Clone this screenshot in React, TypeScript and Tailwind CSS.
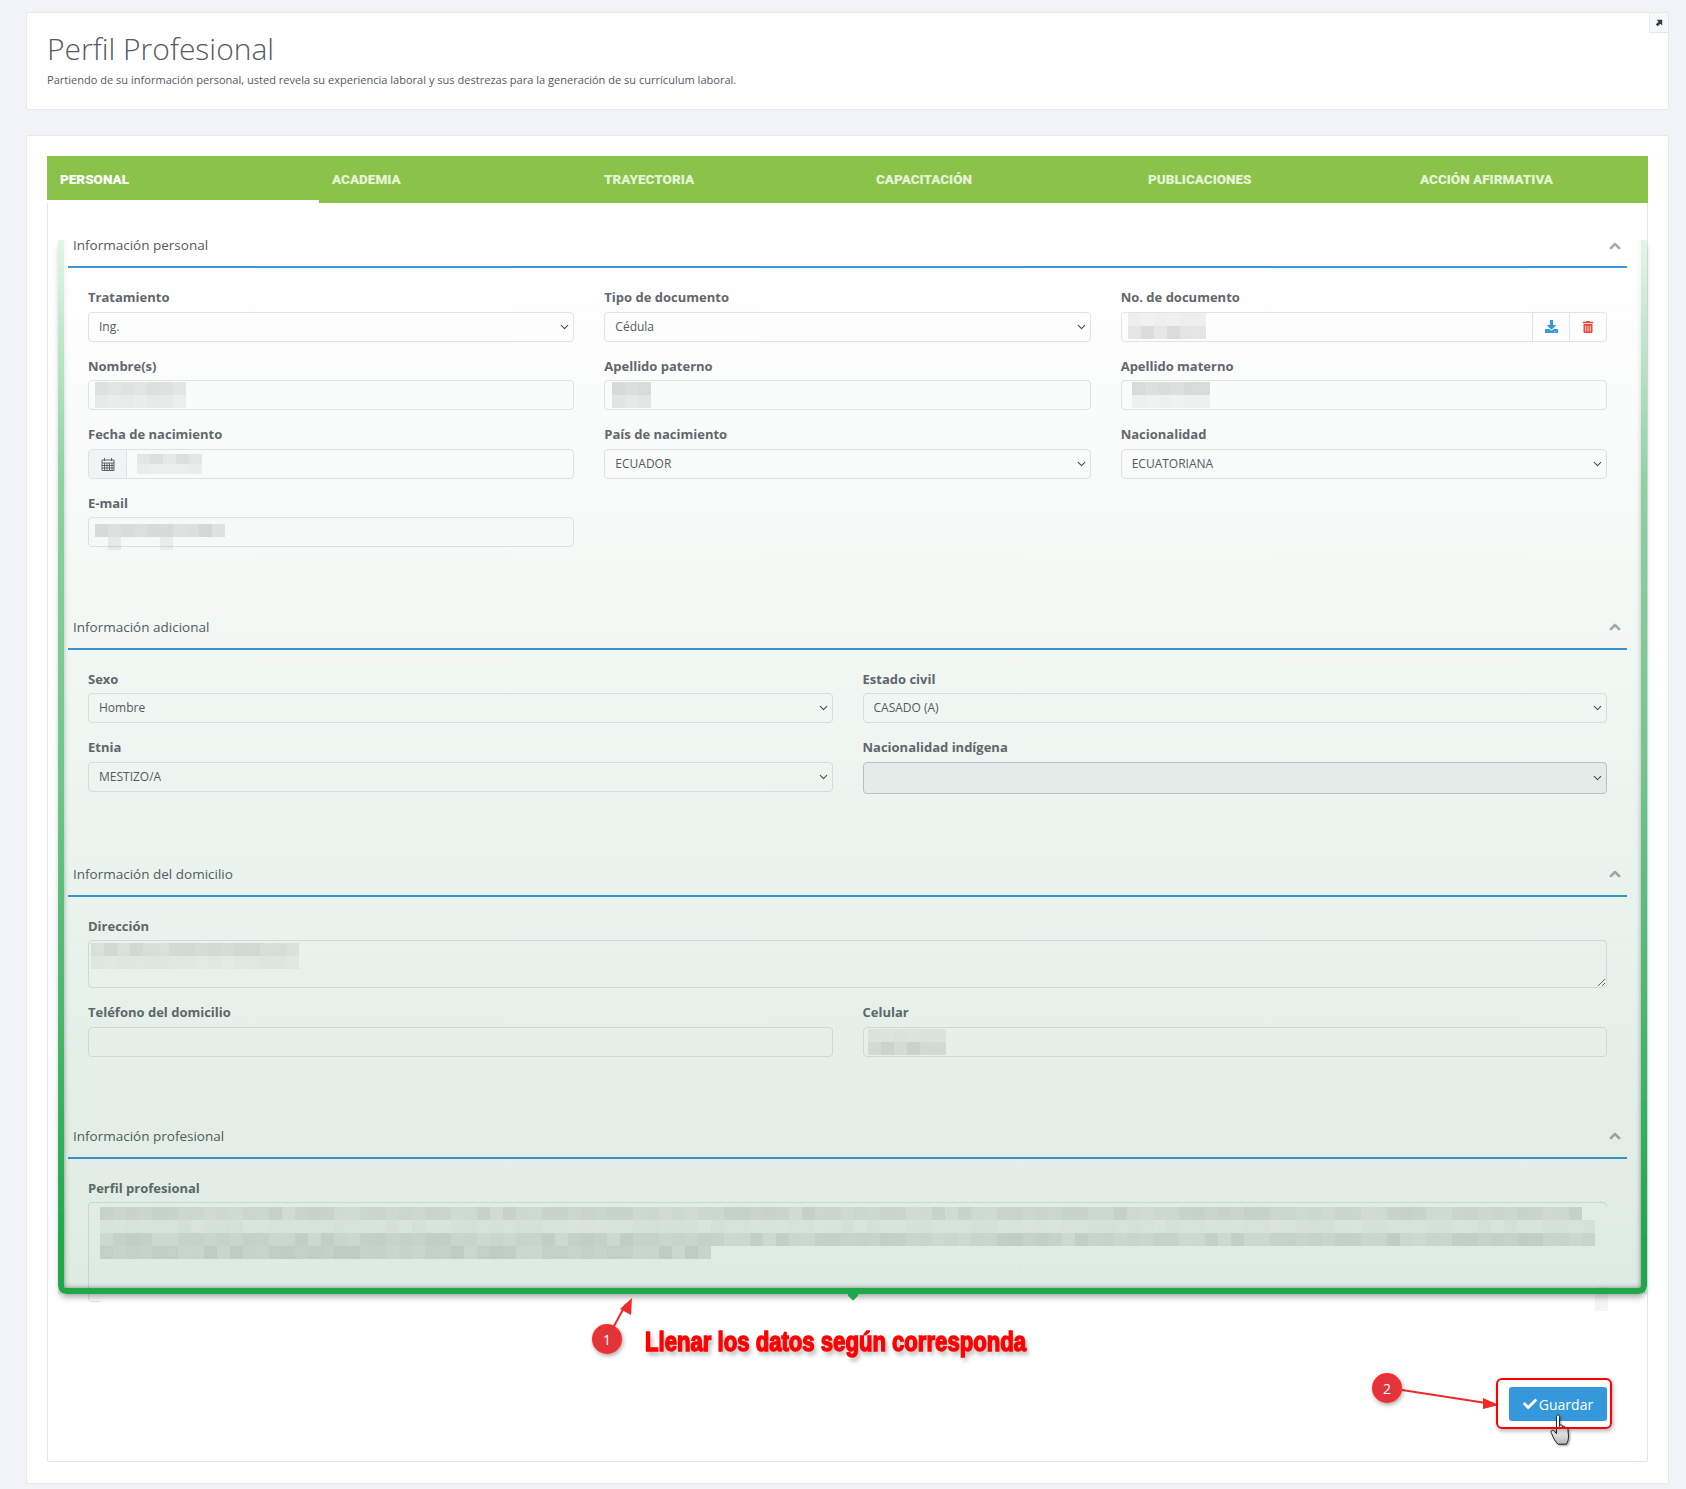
import { FaCheck, FaChevronUp, FaDownload, FaTrashAlt } from "react-icons/fa";
import { ChevronDown } from "lucide-react";

const inputBox = "h-[30px] w-full rounded-[4px] border border-[#e2e5ec] bg-white text-[12px] text-[#575962]";

const Mosaic = ({ lengths, strengths, w = 13, h = 13, seed = 1, skip = [] }: { lengths: number[]; strengths: number[]; w?: number; h?: number; seed?: number; skip?: string[] }) => (
  <div className="flex shrink-0 flex-col">
    {lengths.map((len, r) => (
      <div key={r} className="flex">
        {Array.from({ length: len }).map((_, c) => {
          const n = (((c + seed) * 37 + (r + 1) * 61 + ((c * c + seed) % 7) * 29) % 100) / 100;
          const alpha = skip.includes(`${r}:${c}`) ? 0 : strengths[r] * (0.7 + n * 0.45);
          return <div key={c} style={{ width: w, height: h, backgroundColor: `rgba(0,0,0,${alpha.toFixed(3)})` }} />;
        })}
      </div>
    ))}
  </div>
);

const Label = ({ children }: { children: string }) => (
  <label className="mb-[4.5px] block h-5 text-[13px] leading-5 font-bold text-[#64666e]">{children}</label>
);

const Select = ({ label, value, disabled }: { label: string; value: string; disabled?: boolean }) => (
  <div>
    <Label>{label}</Label>
    <div className="relative">
      <select
        defaultValue={value}
        disabled={disabled}
        className={
          disabled
            ? "block h-8 w-full appearance-none rounded-[4px] border border-[#c4c5d6] bg-[#f4f5f8] px-[10px] text-[12px] opacity-100"
            : `${inputBox} block appearance-none px-[10px]`
        }
      >
        <option value={value}>{value}</option>
      </select>
      <ChevronDown size={13} strokeWidth={2} className="pointer-events-none absolute top-1/2 right-[3px] -translate-y-1/2 text-[#4a4b52]" />
    </div>
  </div>
);

const BlurInput = ({ label, lengths, strengths, seed, pad = "items-center pl-[6px]", skip }: { label: string; lengths: number[]; strengths: number[]; seed: number; pad?: string; skip?: string[] }) => (
  <div>
    <Label>{label}</Label>
    <div className={`${inputBox} flex ${pad}`}>
      <Mosaic lengths={lengths} strengths={strengths} seed={seed} skip={skip} />
    </div>
  </div>
);

const Section = ({ title, className, children }: { title: string; className?: string; children: React.ReactNode }) => (
  <section className={className}>
    <div className="flex h-[45px] items-center justify-between border-b-2 border-[#3498db] pt-[2px] pr-[6px] pl-[5px] text-[13.5px] text-[#575962]">
      <span>{title}</span>
      <FaChevronUp stroke="currentColor" strokeWidth={40} className="text-[12px] text-[#a5a7ad]" />
    </div>
    <div className="px-[20px] pt-[19px]">{children}</div>
  </section>
);

const tabs = ["PERSONAL", "ACADEMIA", "TRAYECTORIA", "CAPACITACIÓN", "PUBLICACIONES", "ACCIÓN AFIRMATIVA"];

export default function App() {
  return (
    <div className="relative h-[1489px] overflow-hidden bg-[#f2f3f8] pt-3 pr-[17px] pl-[26px] font-['Open_Sans',sans-serif]">
      {/* encabezado */}
      <div className="relative h-[98px] rounded-[2px] border border-[#e7e8ee] bg-white pt-[16px] pl-[20px]">
        <h1 className="text-[30px] leading-[40px] font-light text-[#575962]">Perfil Profesional</h1>
        <p className="mt-[3px] text-[11.05px] leading-4 text-[#575962]">
          Partiendo de su información personal, usted revela su experiencia laboral y sus destrezas para la generación de su currículum laboral.
        </p>
        <div className="absolute top-0 right-0 flex h-5 w-[19px] items-center justify-center border-b border-l border-[#e7e8ee] bg-[#f7f8fa]">
          <svg viewBox="0 0 10 10" className="h-[8px] w-[8px] fill-[#2c3e50]">
            <path d="M2 1h7v7L6.8 5.8 3.4 9.2 1 6.8 4.4 3.4z" />
          </svg>
        </div>
      </div>

      {/* tarjeta principal */}
      <div className="mt-[25px] h-[1349px] rounded-[2px] border border-[#e7e8ee] bg-white px-5 pt-5">
        <div className="flex h-[47px] bg-[#8bc34a] font-['Roboto',sans-serif] text-[13.5px] font-black">
          {tabs.map((tab, i) => (
            <div
              key={tab}
              className={`flex items-center border-b-[3px] pt-[3px] pl-[13px] ${i === 5 ? "flex-1" : "w-[272px]"} ${i === 0 ? "border-white text-white" : "border-transparent text-[#e6f3d6]"}`}
            >
              {tab}
            </div>
          ))}
        </div>

        <div className="relative h-[1259px] rounded-b-[2px] border-x border-b border-[#e2e5ec] px-5 pt-5">
          <Section title="Información personal">
            <div className="grid grid-cols-3 gap-x-[30px] gap-y-[14px]">
              <Select label="Tratamiento" value="Ing." />
              <Select label="Tipo de documento" value="Cédula" />
              <div>
                <Label>No. de documento</Label>
                <div className={`${inputBox} flex overflow-hidden`}>
                  <div className="flex flex-1 items-start pl-[6px]">
                    <Mosaic lengths={[6, 6]} strengths={[0.06, 0.12]} seed={3} />
                  </div>
                  <div className="flex w-[37px] items-center justify-center border-l border-[#e2e5ec]">
                    <FaDownload className="text-[13px] text-[#3498db]" />
                  </div>
                  <div className="flex w-[37px] items-center justify-center border-l border-[#e2e5ec]">
                    <FaTrashAlt className="text-[12px] text-[#e74c3c]" />
                  </div>
                </div>
              </div>
              <BlurInput label="Nombre(s)" lengths={[7, 7]} strengths={[0.1, 0.08]} seed={5} />
              <BlurInput label="Apellido paterno" lengths={[3, 3]} strengths={[0.12, 0.1]} seed={2} pad="items-center pl-[7px]" />
              <BlurInput label="Apellido materno" lengths={[6, 6]} strengths={[0.12, 0.05]} seed={8} pad="items-center pl-[10px]" />
              <div>
                <Label>Fecha de nacimiento</Label>
                <div className={`${inputBox} flex overflow-hidden`}>
                  <div className="flex w-[38px] items-center justify-center border-r border-[#e2e5ec] bg-[#f7f8fa]">
                    <svg viewBox="0 0 14 14" className="h-[14px] w-[14px] fill-none stroke-[#55565e]" strokeWidth="0.9">
                      <path d="M1 3h12v10.5H1zM1 6h12M1 8.5h12M1 11h12M3.5 6v7.5M6 6v7.5M8.5 6v7.5M11 6v7.5M3.5 1v3M10.5 1v3" />
                    </svg>
                  </div>
                  <div className="flex flex-1 items-center pl-[10px]">
                    <Mosaic lengths={[5, 5]} strengths={[0.1, 0.05]} h={10} seed={4} />
                  </div>
                </div>
              </div>
              <Select label="País de nacimiento" value="ECUADOR" />
              <Select label="Nacionalidad" value="ECUATORIANA" />
              <BlurInput
                label="E-mail"
                lengths={[10, 6]}
                strengths={[0.13, 0.06]}
                seed={6}
                pad="items-start pt-[6px] pl-[6px]"
                skip={["1:0", "1:2", "1:3", "1:4"]}
              />
            </div>
          </Section>

          <Section title="Información adicional" className="mt-[57.5px]">
            <div className="grid grid-cols-2 items-start gap-x-[30px] gap-y-[14px]">
              <Select label="Sexo" value="Hombre" />
              <Select label="Estado civil" value="CASADO (A)" />
              <Select label="Etnia" value="MESTIZO/A" />
              <Select label="Nacionalidad indígena" value="" disabled />
            </div>
          </Section>

          <Section title="Información del domicilio" className="mt-[58px]">
            <Label>Dirección</Label>
            <div className="relative">
              <textarea readOnly className="block h-[48px] w-full rounded-[4px] border border-[#e2e5ec] bg-white" />
              <div className="absolute top-[3px] left-[3px]">
                <Mosaic lengths={[16, 16]} strengths={[0.1, 0.045]} seed={7} />
              </div>
            </div>
            <div className="mt-[14px] grid grid-cols-2 gap-x-[30px]">
              <div>
                <Label>Teléfono del domicilio</Label>
                <div className={inputBox} />
              </div>
              <BlurInput label="Celular" lengths={[6, 6]} strengths={[0.06, 0.12]} seed={9} pad="items-center pl-[4px]" />
            </div>
          </Section>

          <Section title="Información profesional" className="mt-[57px]">
            <Label>Perfil profesional</Label>
            <div className="relative">
              <textarea readOnly className="block h-[100px] w-full resize-none rounded-[4px] border border-[#e2e5ec] bg-white" />
              <div className="absolute top-[5px] right-[-1px] bottom-[-9px] left-[12px] bg-white" />
              <div className="absolute top-[5px] left-[12px]">
                <Mosaic lengths={[114, 115, 115, 47]} strengths={[0.11, 0.05, 0.12, 0.13]} seed={11} />
              </div>
              <div className="absolute top-[85px] right-[-1px] h-[24px] w-[13px] bg-black/[0.04]" />
            </div>
          </Section>

          <div className="mt-[85px] flex justify-end pr-5">
            <button className="flex h-[34px] w-[98px] items-center justify-center gap-[2px] rounded-[3px] bg-[#3498db] text-[14px] text-white">
              <FaCheck className="text-[14px]" />
              Guardar
            </button>
          </div>

          {/* resaltado verde sobre el formulario */}
          <div className="pointer-events-none absolute top-[37px] left-[10px] h-[1054px] w-[1589px] bg-linear-to-b from-[rgba(30,120,60,0)] to-[rgba(30,120,60,0.15)]" />
          <div className="pointer-events-none absolute top-[37px] left-[10px] h-[1054px] w-[1589px] rounded-b-[8px] shadow-[0_5px_6px_-2px_rgba(0,0,0,0.35)]" />
          <div className="pointer-events-none absolute top-[17px] left-[10px] h-[1074px] w-[1589px] rounded-b-[8px] border-x-[6px] border-b-[6px] border-[#1fa84a] shadow-[inset_0_0_5px_rgba(0,0,0,0.45)] [mask-image:linear-gradient(to_bottom,transparent_20px,rgba(0,0,0,0.12)_20px,rgba(0,0,0,0.5)_25%,rgba(0,0,0,0.6)_50%,rgba(0,0,0,0.8)_75%,black_95%)]" />
          <div className="absolute top-[1088px] left-[801px] h-2 w-2 rotate-45 rounded-[1px] bg-[#1fa84a]" />
        </div>
      </div>

      {/* anotaciones */}
      <svg className="pointer-events-none absolute top-0 left-0 h-[1489px] w-[1686px]" viewBox="0 0 1686 1489" fill="none">
        <path d="M614 1326 L626 1304" stroke="#ee2a2a" strokeWidth="2" />
        <path d="M632 1298 L631 1315 L620 1309 Z" fill="#ee2a2a" />
        <path d="M1402 1390 L1486 1403" stroke="#ee2a2a" strokeWidth="2" />
        <path d="M1499 1405 L1483 1398 L1483 1409 Z" fill="#ee2a2a" />
        <defs>
          <linearGradient id="hand" x1="0" y1="0" x2="0" y2="1">
            <stop offset="0.45" stopColor="#ffffff" />
            <stop offset="1" stopColor="#b5b5b5" />
          </linearGradient>
        </defs>
        <g transform="translate(1550 1414)" className="drop-shadow-[1px_1px_1px_rgba(0,0,0,0.4)]">
          <path
            d="M6.5 2.5c0-2 3-2 3 0v10l0-.5c0-1.6 2.8-1.6 2.8 0v1.5c0-1.6 2.8-1.6 2.8 0v1.5c0-1.6 2.8-1.4 2.8.2l.6 7c.2 3-1 6-2 8H8c-1.5-1.5-3.5-4-5-7.5-1-2.5-2-4-2-5 0-1.5 2-2 3-1l2.5 3z"
            fill="url(#hand)"
            stroke="#222"
            strokeWidth="1"
          />
        </g>
      </svg>

      <div className="pointer-events-none absolute top-[1378px] left-[1496px] h-[51px] w-[116px] rounded-[6px] border-2 border-[#ff0000] shadow-[1px_2px_4px_rgba(0,0,0,0.3)]" />

      <div className="absolute top-[1324px] left-[592px] flex h-[30px] w-[30px] items-center justify-center rounded-full border-2 border-[#ff2a2a] bg-[#e0353a] text-[14px] text-white shadow-[1px_2px_4px_rgba(0,0,0,0.35)]">
        1
      </div>
      <div className="absolute top-[1373px] left-[1372px] flex h-[30px] w-[30px] items-center justify-center rounded-full border-2 border-[#ff2a2a] bg-[#e0353a] text-[14px] text-white shadow-[1px_2px_4px_rgba(0,0,0,0.35)]">
        2
      </div>
      <div className="absolute top-[1326px] left-[645px] origin-left scale-x-[0.79] font-['Liberation_Sans',sans-serif] text-[28px] leading-[32px] font-bold whitespace-nowrap text-[#ff0000] [-webkit-text-stroke:1.5px_#ff0000] [text-shadow:3px_4px_5px_rgba(0,0,0,0.35)]">
        Llenar los datos según corresponda
      </div>
    </div>
  );
}
